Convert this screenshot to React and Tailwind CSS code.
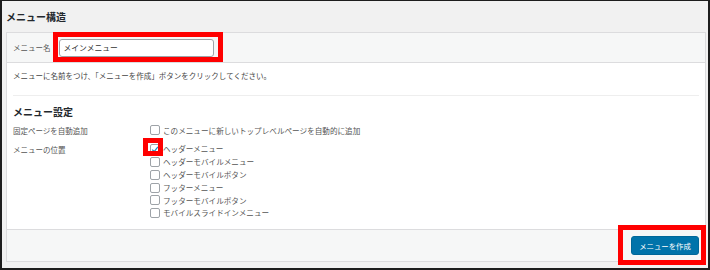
import React from "react";

const font = { fontFamily: '"Noto Sans CJK JP", "Noto Sans", sans-serif' };

function Box({ checked }) {
  return (
    <span className="relative w-[10px] h-[10px] shrink-0 rounded-[2px] border border-[#9ea3a8] bg-white flex items-center justify-center">
      {checked && (
        <svg width="9" height="9" viewBox="0 0 10 10" className="block">
          <path d="M1.5 5.2 L4 7.6 L8.6 1.8" fill="none" stroke="#1e8cbe" strokeWidth="1.6" />
        </svg>
      )}
    </span>
  );
}

function Row({ checked, children }) {
  return (
    <div className="flex items-center h-[12.8px] gap-[3px]">
      <Box checked={checked} />
      <span className="text-[7.6px] leading-none text-[#555]">{children}</span>
    </div>
  );
}

export default function App() {
  const locations = [
    "ヘッダーメニュー",
    "ヘッダーモバイルメニュー",
    "ヘッダーモバイルボタン",
    "フッターメニュー",
    "フッターモバイルボタン",
    "モバイルスライドインメニュー",
  ];
  return (
    <div
      className="relative w-[710px] h-[270px] bg-[#f1f1f1] border-t border-l-2 border-r-2 border-b-2 border-[#1d1d1d] flex flex-col overflow-hidden"
      style={font}
    >
      <div className="h-[31px] flex items-center pl-[4px] text-[10px] font-bold text-[#23282d]">
        メニュー構造
      </div>
      <div className="ml-[4px] w-[700px] h-[230px] border border-[#dcdcde] flex flex-col">
        <div className="h-[30px] bg-[#f6f7f7] border-b border-[#dcdcde] flex items-center pl-[6px] gap-[8px]">
          <span className="text-[7.5px] text-[#555]">メニュー名</span>
          <div className="w-[155px] h-[18px] bg-white border border-[#9ea3a8] rounded-[3px] flex items-center pl-[4px] text-[7.8px] text-[#333]">
            メインメニュー
          </div>
        </div>
        <div className="flex-1 bg-white flex flex-col">
          <div className="pt-[7px] px-[6px] text-[7.5px] leading-[12px] text-[#444]">
            メニューに名前をつけ、「メニューを作成」ボタンをクリックしてください。
          </div>
          <div className="mx-[6px] mt-[13px] border-t border-[#eeeeee]"></div>
          <div className="px-[6px] mt-[9px] text-[10px] leading-[14px] font-bold text-[#23282d]">
            メニュー設定
          </div>
          <div className="px-[6px] mt-[5px] flex">
            <div className="w-[137px] text-[7.5px] text-[#555] h-[12.8px] flex items-center">固定ページを自動追加</div>
            <Row>このメニューに新しいトップレベルページを自動的に追加</Row>
          </div>
          <div className="px-[6px] mt-[6px] flex">
            <div className="w-[137px] text-[7.5px] text-[#555] h-[12.8px] flex items-center">メニューの位置</div>
            <div className="flex flex-col">
              {locations.map((l, i) => (
                <Row key={l} checked={i === 0}>{l}</Row>
              ))}
            </div>
          </div>
        </div>
        <div className="h-[32px] bg-[#f6f7f7] border-t border-[#dcdcde] flex items-center justify-end pr-[6px]">
          <div className="w-[68px] h-[19px] bg-[#0073aa] border border-[#006799] rounded-[3px] flex items-center justify-center text-[7.4px] text-white">
            メニューを作成
          </div>
        </div>
      </div>

      <div className="absolute left-[51px] top-[31px] w-[170px] h-[30px] border-[5px] border-[#ff0000]"></div>
      <div className="absolute left-[141px] top-[137px] w-[20px] h-[18px] border-[5px] border-[#ff0000]"></div>
      <div className="absolute left-[616px] top-[224px] w-[88px] h-[40px] border-[5px] border-[#ff0000]"></div>
    </div>
  );
}
